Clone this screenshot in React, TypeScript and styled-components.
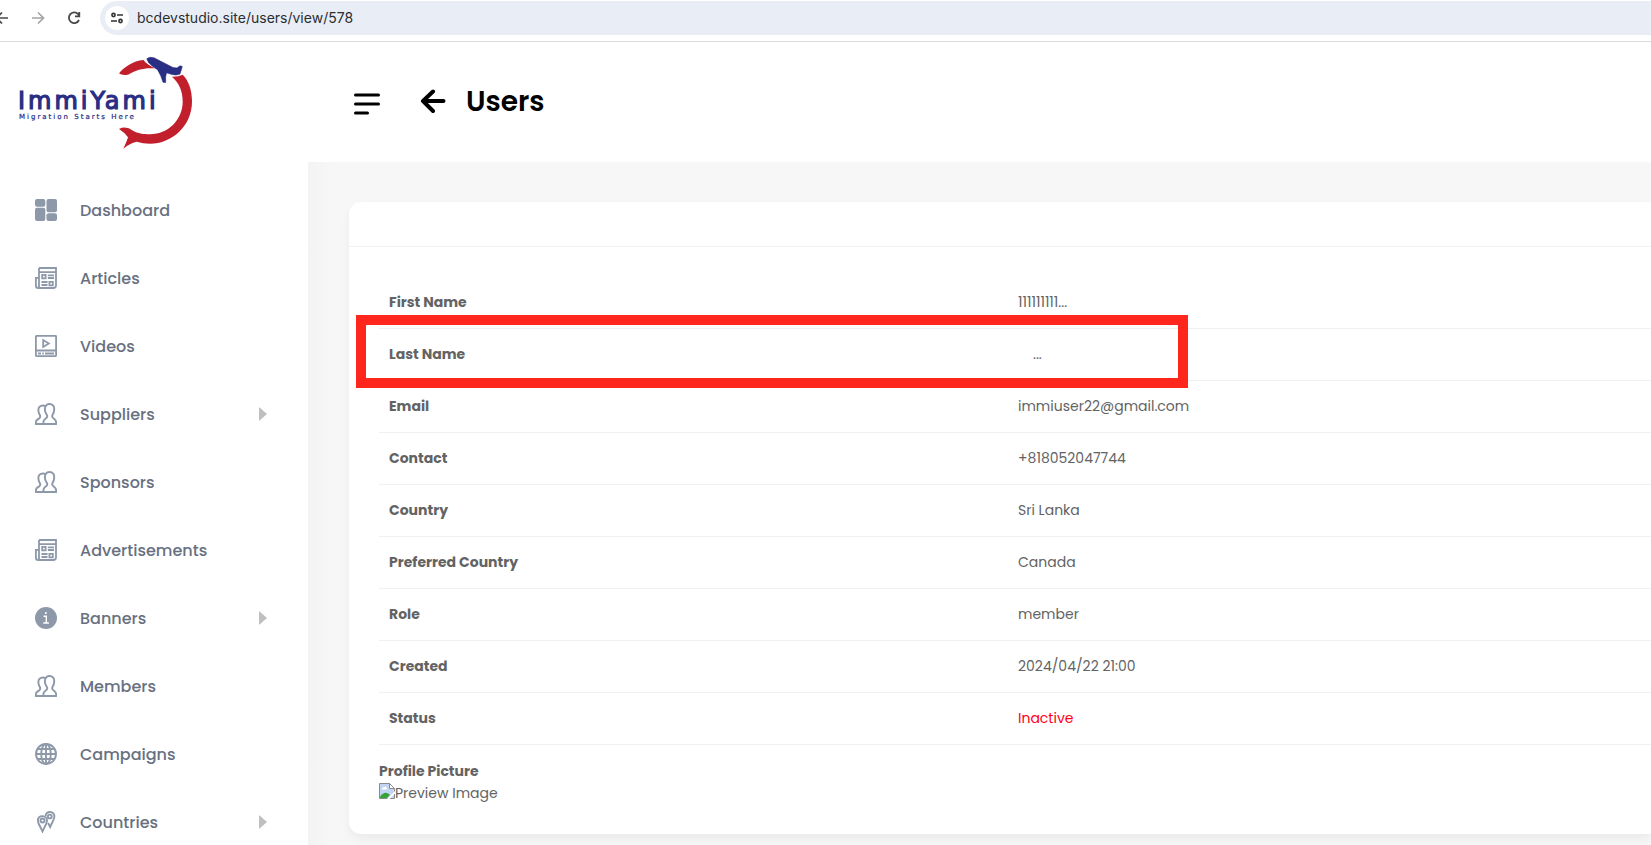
import React from 'react';
import styled, { createGlobalStyle } from 'styled-components';

const Global = createGlobalStyle`
  *, *::before, *::after { box-sizing: border-box; }
  html, body { margin: 0; }
  html { overflow: hidden; }
  body { font-family: Poppins, Inter, "Liberation Sans", sans-serif; font-size: 14px; line-height: 22px; color: #636363; background: #fff; }
  button { border: 0; padding: 0; background: none; font: inherit; color: inherit; cursor: pointer; }
  a { color: inherit; text-decoration: none; }
`;

const BrowserBar = styled.header`
  display: flex;
  align-items: center;
  height: 42px;
  padding-bottom: 6px;
  overflow: hidden;
  border-bottom: 1px solid #dadbdd;
`;
const NavButtons = styled.div`
  display: flex;
  gap: 16px;
  margin-left: -8px;
  margin-right: 16px;
`;
const NavButton = styled.button<{ $muted?: boolean }>`
  display: flex;
  width: 20px;
  height: 20px;
  color: ${(p) => (p.$muted ? '#a3a4a6' : '#47484a')};
`;
const AddressBar = styled.div`
  flex: 1;
  display: flex;
  align-items: center;
  gap: 8px;
  height: 34px;
  padding-left: 5px;
  border-radius: 17px 0 0 17px;
  background: #e9edf6;
`;
const SiteInfo = styled.button`
  display: flex;
  flex: none;
  align-items: center;
  justify-content: center;
  width: 24px;
  height: 24px;
  border-radius: 50%;
  background: #fff;
  color: #333;
`;
const Address = styled.input`
  flex: 1;
  min-width: 0;
  padding: 0;
  border: 0;
  outline: 0;
  background: transparent;
  color: #2b2d30;
  font: 14px/20px Inter, sans-serif;
`;

const Shell = styled.div`
  display: flex;
  align-items: stretch;
`;
const Sidebar = styled.aside`
  flex: none;
  width: 308px;
  background: #fff;
`;
const LogoLink = styled.a`
  display: block;
  height: 120px;
  padding: 12px 0 0 16px;
`;
const Menu = styled.nav`
  display: flex;
  flex-direction: column;
  padding-top: 14px;
`;
const MenuItem = styled.a`
  display: flex;
  align-items: center;
  gap: 23px;
  height: 68px;
  padding: 0 41px 0 35px;
  color: #68707f;
  font-size: 16px;
  font-weight: 500;
  svg { flex: none; color: #8d98a9; }
`;
const MenuLabel = styled.span`
  flex: 1;
  padding-top: 2px;
`;
const Caret = styled.span`
  border: solid transparent;
  border-width: 7px 0 7px 8px;
  border-left-color: #bfbfbf;
`;

const Main = styled.main`
  flex: 1;
  min-width: 0;
  display: flex;
  flex-direction: column;
`;
const PageHeader = styled.div`
  display: flex;
  align-items: center;
  height: 120px;
  padding: 0 0 1px 46px;
`;
const IconButton = styled.button`
  display: flex;
`;
const BackLink = styled.a`
  display: flex;
  margin: 0 20px 0 40px;
`;
const Title = styled.h1`
  margin: 0;
  color: #000;
  font-size: 28px;
  line-height: 40px;
  font-weight: 600;
`;
const Content = styled.div`
  flex: 1;
  padding: 40px 0 40px 41px;
  background: linear-gradient(90deg, #f3f3f3, #f7f7f7 22px);
`;
const Card = styled.section`
  border-radius: 12px 0 0 12px;
  background: #fff;
  box-shadow: 0 5px 10px rgba(0, 0, 0, 0.05);
`;
const CardHeader = styled.div`
  height: 45px;
  border-bottom: 1px solid #f1f1f1;
`;
const CardBody = styled.div`
  position: relative;
  padding: 29px 0 30px 30px;
`;
const Details = styled.table`
  width: 100%;
  border-collapse: collapse;
  table-layout: fixed;
`;
const Row = styled.tr`
  height: 52px;
  border-bottom: 1px solid #f1f1f1;
`;
const Term = styled.th`
  width: 629px;
  padding: 0 10px;
  text-align: left;
  font-weight: 700;
`;
const Value = styled.td<{ $danger?: boolean }>`
  padding: 0 10px;
  white-space: pre;
  color: ${(p) => (p.$danger ? '#ff0016' : 'inherit')};
`;
const Highlight = styled.div`
  position: absolute;
  top: 68px;
  left: 7px;
  width: 832px;
  height: 73px;
  border: 10px solid #ff261e;
  pointer-events: none;
`;
const Picture = styled.div`
  padding-top: 15px;
`;
const PictureLabel = styled.div`
  font-weight: 700;
`;
const Preview = styled.div`
  display: flex;
  align-items: flex-start;
`;

const iconBox = { width: 22, height: 22, viewBox: '0 0 22 22', fill: 'none', stroke: 'currentColor' };

const DashboardIcon = () => (
  <svg {...iconBox} stroke="none" fill="currentColor">
    <rect x="0" y="0" width="10.300" height="7.700" rx="2" />
    <rect x="0" y="8.800" width="10.300" height="13.200" rx="2" />
    <rect x="11.500" y="0" width="10.500" height="13.200" rx="2" />
    <rect x="11.500" y="14.300" width="10.500" height="7.700" rx="2" />
  </svg>
);
const NewsIcon = () => (
  <svg {...iconBox} strokeWidth="1.800">
    <path d="M4 1h17v17.500a2.600 2.600 0 0 1-2.600 2.500H3.200A2.300 2.300 0 0 1 .9 18.700V10.900H4M4 1v17.500a2 2 0 0 1-1.500 2.500M4.500 5.200H21" />
    <path d="M7.200 7.900h3.400v3.400H7.200zM14.400 14.900h3.400v3.400h-3.400zM12.800 8.300H19M12.800 11H19M6.500 15H12.500M6.500 18H12.500" />
  </svg>
);
const VideoIcon = () => (
  <svg {...iconBox} strokeWidth="1.800">
    <rect x=".9" y=".9" width="20.200" height="20.200" rx=".5" />
    <path d="M1 15.500h20M8.200 5v7l5.600-3.500zM3 18.500h3M7.200 18.500h1.600M10 18.500h9" />
  </svg>
);
const PeopleIcon = () => (
  <svg {...iconBox} strokeWidth="1.900" strokeLinejoin="round">
    <path d="M14.500 1c3.300 0 4.900 2.500 4.700 5.600-.1 2.900-.8 3.900-1.600 5.200-.5.900-.5 2 .2 2.800 1.300 1.400 3.300 2 3.300 4.400v2H8.400v-2c0-2.400 2.200-3 3.300-4.400.7-.8.600-1.900.1-2.800C11 10.500 10 9.500 9.900 6.600 9.800 3.500 11.200 1 14.500 1z" />
    <path d="M10.400 3C9.800 2.700 9.100 2.500 8 2.500c-3.200 0-4.800 2-4.600 5 .1 2.500.9 3.400 1.500 4.600.4.900.4 1.900-.2 2.700C3.500 16.300.9 16.800.9 19v2h7.400" />
  </svg>
);
const InfoIcon = () => (
  <svg {...iconBox} stroke="none">
    <circle cx="11" cy="11" r="11" fill="currentColor" />
    <path d="M8.500 9.300H11.300V16M8.300 16h5.600" stroke="#fff" strokeWidth="1.400" />
    <circle cx="10.900" cy="6" r="1" fill="#fff" />
  </svg>
);
const GlobeIcon = () => (
  <svg {...iconBox} strokeWidth="1.900">
    <circle cx="11" cy="11" r="10" />
    <ellipse cx="11" cy="11" rx="4.800" ry="10" />
    <path d="M11 1v20M1 11h20M2.500 6h17M2.500 16h17" />
  </svg>
);
const PinsIcon = () => (
  <svg {...iconBox} strokeWidth="1.900">
    <path d="M10.500 5C10.900 2.600 12.500 1 15 1c2.900 0 4.600 2.200 4.400 4.800-.2 3-2.600 6-4.300 10.200l-2-4" />
    <circle cx="14.800" cy="5.500" r="1.900" />
    <path d="M7.500 20.500C6 16.500 3 13 2.900 9.700 2.900 6.900 4.700 5.100 7.500 5.100s4.600 1.800 4.500 4.600c-.1 3.200-3 6.800-4.500 10.800z" />
    <circle cx="7.500" cy="9.500" r="2" />
  </svg>
);

const Logo = () => (
  <svg width="180" height="100" viewBox="16 54 180 100" role="img" aria-label="ImmiYami">
    <path fill="#c21f2d" d="M119 73.300C124 67.500 133 60.500 143.500 60C146 63.500 150 66 155 68.300C144 67.500 137 69.500 128.500 74.500Q122 76 119 73.300Z" />
    <path fill="#c21f2d" d="M172 76.800Q178 77 182.700 74.700C189 81 192 91 192 101.500C192 126 172 143.700 150 143.700Q143 143.700 136.500 141.700Q130 143 123.300 148.700Q127 141 128 137.300Q124 132 119 129Q126 125.500 133 130.700C138 133.500 143 134.200 150 134.200C169 134.200 182.700 119 182.700 101.500C182.700 91 179 83 172 76.800Z" />
    <path fill="#292d83" stroke="#292d83" strokeWidth=".6" strokeLinejoin="round" d="M146.800 58.800Q149 56.300 154 57.800L173 67.600L177 68L180 65.800L182.300 66.500L180 74Q176 75.700 172 74.500L166.500 72.800Q165 77 165.700 82.500L163 82.300Q161 75 157.500 69.700Q152 66.500 148.500 62.500Z" />
    <text x="18" y="109" fill="#292d83" stroke="#292d83" strokeWidth="1.200" fontFamily="DejaVu Sans, sans-serif" fontSize="24" letterSpacing="3">ImmiYami</text>
    <text x="19" y="119" fill="#292d83" stroke="#292d83" strokeWidth=".2" fontFamily="DejaVu Sans, sans-serif" fontSize="7" letterSpacing="2">Migration Starts Here</text>
  </svg>
);

const BrokenImage = () => (
  <svg width="16" height="18" viewBox="0 -1 16 18" aria-hidden="true">
    <path d="M.5.5h10l5 5v10H.5z" fill="#c2d5f5" stroke="#8b8b8b" />
    <path d="M10.500.5v5h5z" fill="#fff" stroke="#8b8b8b" />
    <path d="M3 6.500a1.500 1.500 0 0 1 1.500-2 2 2 0 0 1 3.500.5 1 1 0 0 1 0 1.500z" fill="#fff" />
    <path d="M1 15v-1.500C4 10 6.500 9 9 10.500l2 1.500-3 3z" fill="#35a335" />
    <path d="M8 16l8-8v2.500L10.500 16z" fill="#fff" />
  </svg>
);

const menu = [
  { label: 'Dashboard', Icon: DashboardIcon },
  { label: 'Articles', Icon: NewsIcon },
  { label: 'Videos', Icon: VideoIcon },
  { label: 'Suppliers', Icon: PeopleIcon, nested: true },
  { label: 'Sponsors', Icon: PeopleIcon },
  { label: 'Advertisements', Icon: NewsIcon },
  { label: 'Banners', Icon: InfoIcon, nested: true },
  { label: 'Members', Icon: PeopleIcon },
  { label: 'Campaigns', Icon: GlobeIcon },
  { label: 'Countries', Icon: PinsIcon, nested: true },
];

const details = [
  { term: 'First Name', value: '111111111...' },
  { term: 'Last Name', value: '    ...' },
  { term: 'Email', value: 'immiuser22@gmail.com' },
  { term: 'Contact', value: '+818052047744' },
  { term: 'Country', value: 'Sri Lanka' },
  { term: 'Preferred Country', value: 'Canada' },
  { term: 'Role', value: 'member' },
  { term: 'Created', value: '2024/04/22 21:00' },
  { term: 'Status', value: 'Inactive', danger: true },
];

export default function App() {
  return (
    <>
      <Global />
      <BrowserBar>
        <NavButtons>
          <NavButton aria-label="Back">
            <svg width="20" height="20" viewBox="0 0 20 20" fill="none" stroke="currentColor" strokeWidth="1.700"><path d="M16 10H5M10 4.500L4.500 10l5.500 5.500" /></svg>
          </NavButton>
          <NavButton aria-label="Forward" $muted>
            <svg width="20" height="20" viewBox="0 0 20 20" fill="none" stroke="currentColor" strokeWidth="1.700"><path d="M4 10h11M10 4.500l5.500 5.500-5.500 5.500" /></svg>
          </NavButton>
          <NavButton aria-label="Reload">
            <svg width="20" height="20" viewBox="0 0 20 20" fill="none" stroke="currentColor" strokeWidth="1.800"><path d="M15 12a5.300 5.300 0 1 1-1-6l1.500 1.800M15.300 4v4.300h-4.300" /></svg>
          </NavButton>
        </NavButtons>
        <AddressBar>
          <SiteInfo aria-label="Site information">
            <svg width="14" height="14" viewBox="0 0 14 14" fill="none" stroke="currentColor" strokeWidth="1.600"><circle cx="3.500" cy="4" r="1.600" /><circle cx="10.500" cy="10" r="1.600" /><path d="M7 4h6M1 10h6" /></svg>
          </SiteInfo>
          <Address aria-label="Address" defaultValue="bcdevstudio.site/users/view/578" />
        </AddressBar>
      </BrowserBar>
      <Shell>
        <Sidebar>
          <LogoLink href="#home"><Logo /></LogoLink>
          <Menu>
            {menu.map(({ label, Icon, nested }) => (
              <MenuItem key={label} href={`#${label.toLowerCase()}`}>
                <Icon />
                <MenuLabel>{label}</MenuLabel>
                {nested && <Caret />}
              </MenuItem>
            ))}
          </Menu>
        </Sidebar>
        <Main>
          <PageHeader>
            <IconButton aria-label="Toggle menu">
              <svg width="26" height="26" viewBox="0 0 26 26" fill="none" stroke="#000" strokeWidth="3" strokeLinecap="round"><path d="M1.500 6h23M1.500 15h23M1.500 24h12" /></svg>
            </IconButton>
            <BackLink href="#users" aria-label="Back to users">
              <svg width="26" height="26" viewBox="0 0 26 26" fill="none" stroke="#000" strokeWidth="4" strokeLinecap="round" strokeLinejoin="round"><path d="M23.500 12H3M13 2.500L3 12l10 10" /></svg>
            </BackLink>
            <Title>Users</Title>
          </PageHeader>
          <Content>
            <Card>
              <CardHeader />
              <CardBody>
                <Details>
                  <tbody>
                    {details.map(({ term, value, danger }) => (
                      <Row key={term}>
                        <Term scope="row">{term}</Term>
                        <Value $danger={danger}>{value}</Value>
                      </Row>
                    ))}
                  </tbody>
                </Details>
                <Highlight />
                <Picture>
                  <PictureLabel>Profile Picture</PictureLabel>
                  <Preview><BrokenImage />Preview Image</Preview>
                </Picture>
              </CardBody>
            </Card>
          </Content>
        </Main>
      </Shell>
    </>
  );
}
